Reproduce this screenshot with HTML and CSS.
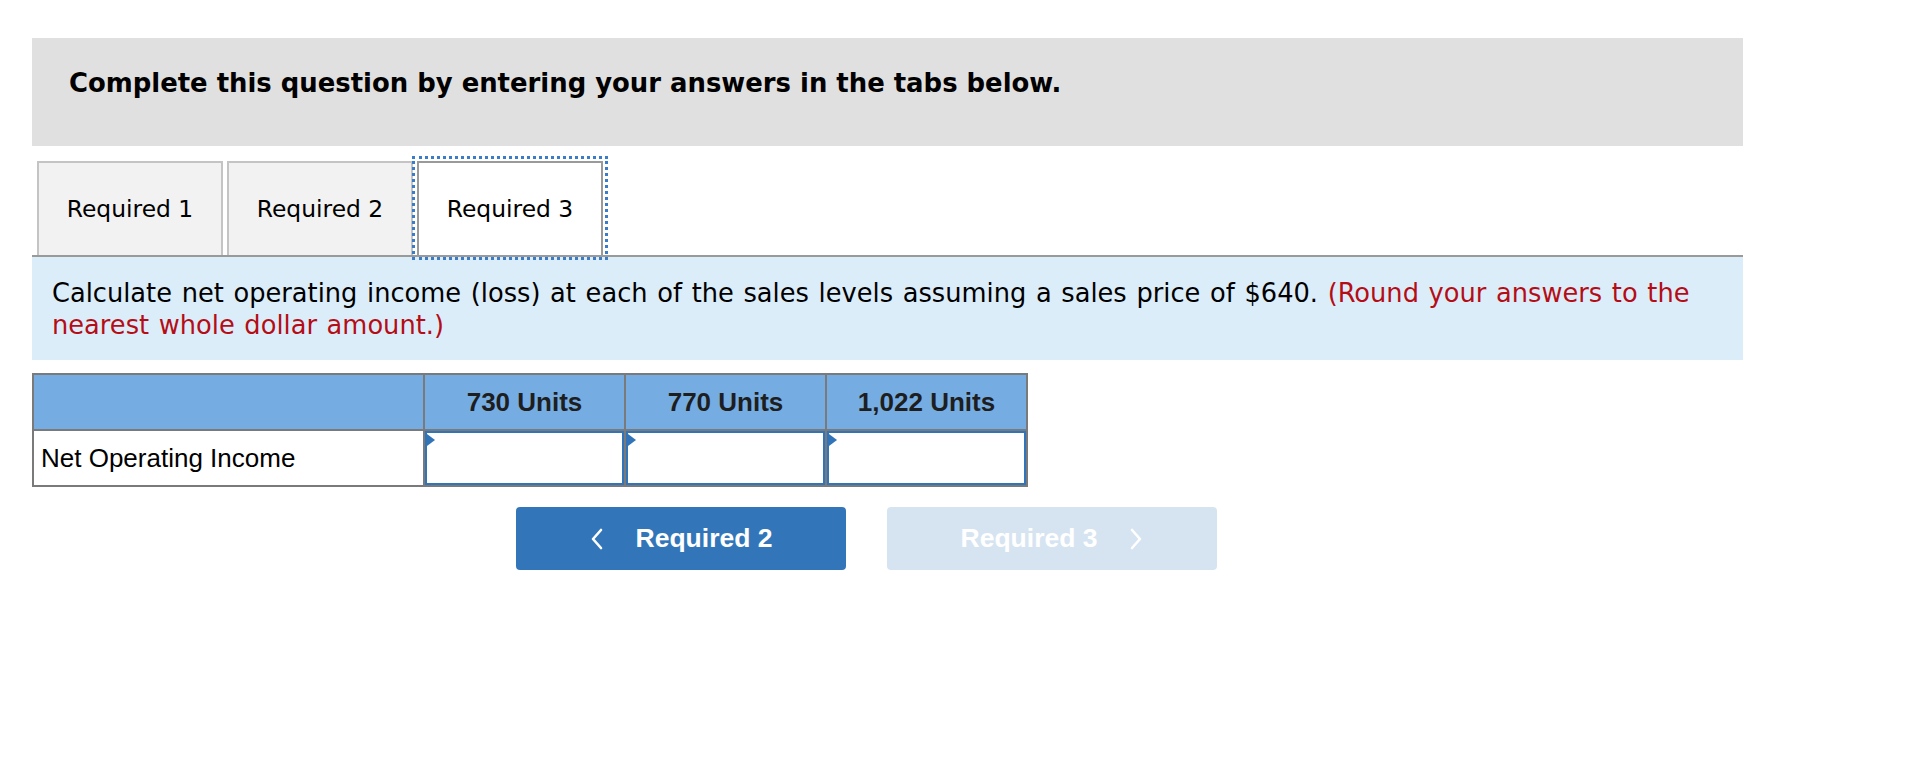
FILE: index.html
```html
<!DOCTYPE html>
<html lang="en">
<head>
<meta charset="utf-8">
<title>Required 3</title>
<link rel="stylesheet" href="styles.css">
</head>
<body>
<div class="page">
  <div class="header">
    <h1 class="heading">Complete this question by entering your answers in the tabs below.</h1>
  </div>

  <div class="tabs">
    <div class="tab">Required 1</div>
    <div class="tab">Required 2</div>
    <div class="tab tab-active">Required 3</div>
  </div>

  <div class="prompt">
    Calculate net operating income (loss) at each of the sales levels assuming a sales price of $640. <span class="note">(Round your answers to the nearest whole dollar amount.)</span>
  </div>

  <table class="grid">
    <thead>
      <tr>
        <th class="label-col"></th>
        <th class="val-col">730 Units</th>
        <th class="val-col">770 Units</th>
        <th class="val-col">1,022 Units</th>
      </tr>
    </thead>
    <tbody>
      <tr>
        <td class="row-label">Net Operating Income</td>
        <td class="cell"><div class="entry"><span class="flag"></span></div></td>
        <td class="cell"><div class="entry"><span class="flag"></span></div></td>
        <td class="cell"><div class="entry"><span class="flag"></span></div></td>
      </tr>
    </tbody>
  </table>

  <div class="nav">
    <div class="btn btn-primary">
      <svg class="chev" width="14" height="22" viewBox="0 0 14 22"><path d="M11 2 L3 11 L11 20" fill="none" stroke="#ffffff" stroke-width="2.6" stroke-linecap="round" stroke-linejoin="round"/></svg>
      <span>Required 2</span>
    </div>
    <div class="btn btn-disabled">
      <span>Required 3</span>
      <svg class="chev" width="14" height="22" viewBox="0 0 14 22"><path d="M3 2 L11 11 L3 20" fill="none" stroke="#ffffff" stroke-width="2.6" stroke-linecap="round" stroke-linejoin="round"/></svg>
    </div>
  </div>
</div>
</body>
</html>
```

FILE: styles.css
```css
html, body {
  margin: 0;
  padding: 0;
  background: #ffffff;
}

.page {
  padding: 38px 0 0 32px;
  width: 1711px;
}

.header {
  background: #e0e0e0;
  height: 108px;
  box-sizing: border-box;
  padding: 30px 0 0 37px;
}

.heading {
  margin: 0;
  font-family: "DejaVu Sans", Verdana, sans-serif;
  font-weight: bold;
  font-size: 25.9px;
  line-height: normal;
  color: #000000;
}

.tabs {
  display: flex;
  gap: 4px;
  margin-top: 15px;
  padding-left: 5px;
  border-bottom: 2px solid #9a9a9a;
}

.tab {
  width: 186px;
  height: 94px;
  box-sizing: border-box;
  border: 2px solid #c4c4c4;
  border-bottom: none;
  background: #f2f2f2;
  display: flex;
  align-items: center;
  justify-content: center;
  font-family: "DejaVu Sans", Verdana, sans-serif;
  font-size: 23.4px;
  color: #000000;
}

.tab-active {
  background: #ffffff;
  border-color: #9a9a9a;
  outline: 3px dotted #3a7cc8;
  outline-offset: 2px;
}

.prompt {
  background: #dcedfa;
  padding: 20px 20px 19px 20px;
  font-family: "DejaVu Sans", Verdana, sans-serif;
  font-size: 25.7px;
  line-height: 32px;
  word-spacing: 1.5px;
  color: #000000;
}

.note {
  color: #b50d16;
}

.grid {
  margin-top: 13px;
  border-collapse: collapse;
  width: 996px;
  font-family: "Liberation Sans", Arial, sans-serif;
  font-size: 26px;
}

.grid th, .grid td {
  border: 2px solid #7a7a7a;
  padding: 0;
}

.grid th {
  background: #75ade3;
  height: 54px;
  font-weight: bold;
  color: #1e1e1e;
  text-align: center;
}

.label-col {
  width: 389px;
}

.val-col {
  width: 199px;
}

.row-label {
  height: 54px;
  padding-left: 7px !important;
  color: #000000;
  vertical-align: middle;
}

.cell {
  height: 54px;
}

.entry {
  position: relative;
  height: 54px;
  box-sizing: border-box;
  border: 2.5px solid #3274b8;
  background: #ffffff;
}

.flag {
  position: absolute;
  left: 0;
  top: 1px;
  width: 0;
  height: 0;
  border-top: 6px solid transparent;
  border-bottom: 6px solid transparent;
  border-left: 8px solid #3274b8;
}

.nav {
  display: flex;
  gap: 41px;
  margin-top: 20px;
  margin-left: 484px;
}

.btn {
  width: 330px;
  height: 63px;
  border-radius: 4px;
  display: flex;
  align-items: center;
  justify-content: center;
  gap: 32px;
  font-family: "Liberation Sans", Arial, sans-serif;
  font-weight: bold;
  font-size: 26.5px;
  color: #ffffff;
}

.btn-primary {
  background: #3276b9;
}

.btn-disabled {
  background: #d6e4f1;
}

.chev {
  display: block;
}
```
